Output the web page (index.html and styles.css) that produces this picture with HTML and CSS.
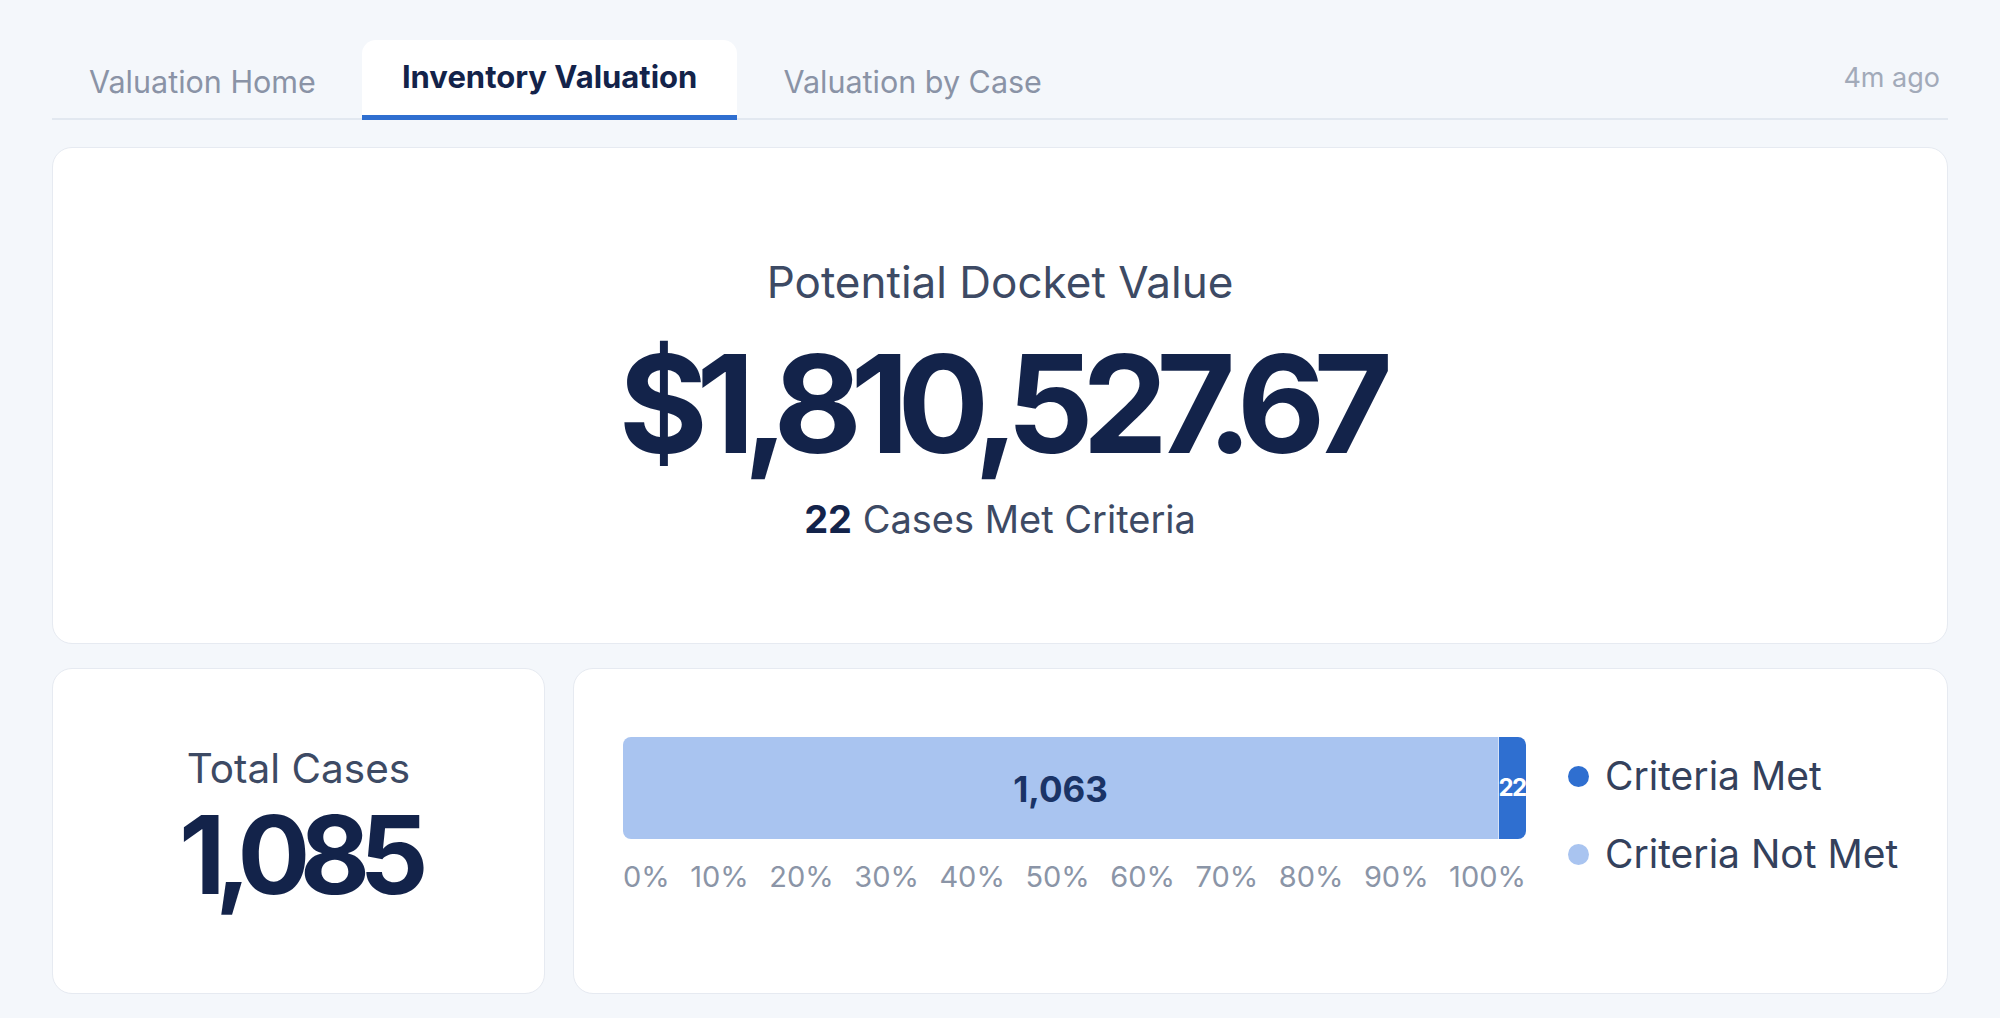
FILE: index.html
```html
<!DOCTYPE html>
<html lang="en">
<head>
<meta charset="utf-8">
<title>Inventory Valuation</title>
<link rel="stylesheet" href="styles.css">
</head>
<body>
<div class="page">
  <nav class="tabs">
    <a class="tab">Valuation Home</a>
    <a class="tab active">Inventory Valuation</a>
    <a class="tab">Valuation by Case</a>
    <span class="updated">4m ago</span>
  </nav>

  <section class="card hero">
    <div class="hero-label">Potential Docket Value</div>
    <div class="hero-value">$1,810,527.67</div>
    <div class="hero-sub"><strong>22</strong> Cases Met Criteria</div>
  </section>

  <div class="row">
    <section class="card total">
      <div class="total-label">Total Cases</div>
      <div class="total-value">1,085</div>
    </section>

    <section class="card chart-card">
      <div class="chart">
        <div class="bar">
          <div class="seg seg-not" style="flex: 1063 1 0">1,063</div>
          <div class="seg seg-met">22</div>
        </div>
        <div class="axis">
          <span>0%</span><span>10%</span><span>20%</span><span>30%</span><span>40%</span><span>50%</span><span>60%</span><span>70%</span><span>80%</span><span>90%</span><span>100%</span>
        </div>
      </div>
      <ul class="legend">
        <li><span class="dot dot-met"></span>Criteria Met</li>
        <li><span class="dot dot-not"></span>Criteria Not Met</li>
      </ul>
    </section>
  </div>
</div>
</body>
</html>
```

FILE: styles.css
```css
* { box-sizing: border-box; }

html, body {
  margin: 0;
  padding: 0;
  background: #f4f7fb;
  font-family: "Inter", "Liberation Sans", sans-serif;
  color: #13234a;
}

.page {
  padding: 40px 52px 24px;
}

/* Tabs */
.tabs {
  display: flex;
  align-items: flex-end;
  gap: 9px;
  border-bottom: 2px solid #e2e8f0;
  height: 80px;
}

.tab {
  display: flex;
  align-items: center;
  justify-content: center;
  height: 78px;
  padding: 4px 37px 0;
  font-size: 30.5px;
  font-weight: 400;
  color: #8a93a6;
  cursor: pointer;
  white-space: nowrap;
}

.tab.active {
  background: #ffffff;
  border-radius: 14px 14px 0 0;
  border-bottom: 5px solid #2f6fd0;
  padding: 0 40px 2px;
  margin-bottom: -2px;
  height: 80px;
  font-weight: 700;
  font-size: 31px;
  color: #13234a;
}

.updated {
  margin-left: auto;
  align-self: center;
  padding: 0 8px 4px 0;
  font-size: 27px;
  color: #a2aab9;
}

/* Cards */
.card {
  background: #ffffff;
  border: 1.5px solid #e6eaf1;
  border-radius: 20px;
}

.hero {
  margin-top: 27px;
  height: 497px;
  padding-top: 8px;
  display: flex;
  flex-direction: column;
  align-items: center;
  justify-content: center;
}

.hero-label {
  font-size: 44px;
  color: #3d4a64;
  line-height: 1.2;
}

.hero-value {
  margin-top: 27px;
  font-size: 136px;
  font-weight: 700;
  letter-spacing: -11.5px;
  line-height: 1;
  color: #13234a;
}

.hero-sub {
  margin-top: 25px;
  font-size: 38px;
  line-height: 1.2;
  color: #3d4a64;
}

.hero-sub strong {
  color: #13234a;
  font-weight: 700;
}

.row {
  display: grid;
  grid-template-columns: 493px 1fr;
  gap: 28px;
  margin-top: 24px;
}

.total {
  height: 326px;
  padding-bottom: 8px;
  display: flex;
  flex-direction: column;
  align-items: center;
  justify-content: center;
}

.total-label {
  font-size: 40.5px;
  color: #3d4a64;
  line-height: 1.2;
}

.total-value {
  margin-top: 8px;
  font-size: 108px;
  font-weight: 700;
  letter-spacing: -10.5px;
  line-height: 1;
  color: #13234a;
}

/* Chart */
.chart-card {
  height: 326px;
  display: flex;
  align-items: center;
  padding: 0 49px 32px;
  gap: 42px;
}

.chart {
  width: 903px;
  flex: none;
}

.bar {
  display: flex;
  height: 102px;
  border-radius: 8px;
  overflow: hidden;
}

.seg {
  display: flex;
  align-items: center;
  justify-content: center;
  font-weight: 700;
}

.seg-not {
  background: #a9c4f0;
  color: #1a3366;
  font-size: 35px;
  padding-top: 2px;
}

.seg-met {
  width: 28px;
  flex: none;
  background: #2f6fd0;
  color: #ffffff;
  font-size: 24px;
  letter-spacing: -1.5px;
  border-left: 1px solid #d6e2f6;
  padding-right: 1px;
}

.axis {
  display: flex;
  justify-content: space-between;
  margin-top: 20px;
  font-size: 29px;
  color: #8b95a7;
}

.legend {
  list-style: none;
  margin: 0;
  padding: 0;
  display: flex;
  flex-direction: column;
  gap: 34px;
}

.legend li {
  display: flex;
  align-items: center;
  gap: 16px;
  font-size: 39px;
  color: #34415c;
  line-height: 44px;
  white-space: nowrap;
}

.dot {
  width: 21px;
  height: 21px;
  border-radius: 50%;
  flex: none;
}

.dot-met { background: #2f6fd0; }
.dot-not { background: #a9c4f0; }
```
